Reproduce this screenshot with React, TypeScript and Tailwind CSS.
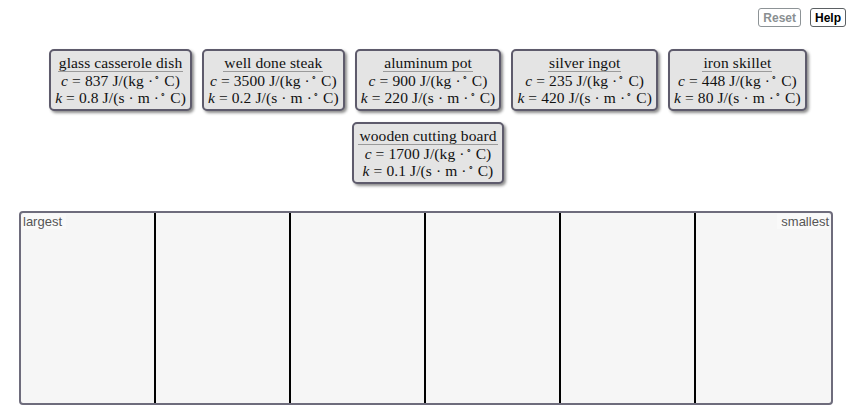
import React from "react";

type Material = { name: string; c: string; k: string };

const materials: Material[] = [
  { name: "glass casserole dish", c: "837", k: "0.8" },
  { name: "well done steak", c: "3500", k: "0.2" },
  { name: "aluminum pot", c: "900", k: "220" },
  { name: "silver ingot", c: "235", k: "420" },
  { name: "iron skillet", c: "448", k: "80" },
  { name: "wooden cutting board", c: "1700", k: "0.1" },
];

// small raised ring used for the degree sign in the unit
const Deg = () => (
  <span className="inline-block -translate-y-[5px] pl-[1px] text-[9px] leading-none">∘</span>
);

function Card({ m }: { m: Material }) {
  return (
    <div className="rounded-[5px] border-2 border-[#5e5b6c] bg-[#e4e4e4] px-[4px] py-[3px] text-center text-[15.5px] leading-[17px] tracking-[0.1px] text-[#111] shadow-[2px_2px_3px_rgba(0,0,0,0.45)] [font-family:'Liberation_Serif',serif]">
      <div className="mx-auto w-fit border-b border-[#9a9a9a] px-[1px]">{m.name}</div>
      <div className="whitespace-nowrap">
        <i>c</i> = {m.c} J/(kg&nbsp;·<Deg />&nbsp;C)
      </div>
      <div className="whitespace-nowrap">
        <i>k</i> = {m.k} J/(s&nbsp;·&nbsp;m&nbsp;·<Deg />&nbsp;C)
      </div>
    </div>
  );
}

export default function App() {
  const cols = [0, 1, 2, 3, 4, 5];
  return (
    <div className="h-[410px] w-[856px] bg-white [font-family:'Liberation_Sans',Arial,sans-serif]">
      <div className="flex justify-end gap-[9px] pr-[10px] pt-[8px]">
        <button className="h-[19px] rounded-[3px] border border-[#8d9396] bg-white px-[4px] text-[12px] font-bold leading-[16px] text-[#8a8f92]">
          Reset
        </button>
        <button className="h-[19px] rounded-[3px] border border-[#5b6063] bg-white px-[4px] text-[12px] font-bold leading-[16px] text-black">
          Help
        </button>
      </div>

      <div className="mx-auto mt-[22px] flex w-[800px] flex-wrap justify-center gap-x-[10px] gap-y-[11px]">
        {materials.map((m) => (
          <Card key={m.name} m={m} />
        ))}
      </div>

      <div className="ml-[19px] mt-[27px] grid h-[194px] w-[814px] grid-cols-6 overflow-hidden rounded-[4px] border-2 border-[#6e6c7c] bg-[#f6f6f6]">
        {cols.map((i) => (
          <div
            key={i}
            className={`flex items-start pt-[1px] ${i < 5 ? "border-r-2 border-black" : ""} ${i === 5 ? "justify-end pr-[2px]" : "pl-[2px]"}`}
          >
            {i === 0 && (
              <span className="bg-[#f9f9f9] pr-[4px] text-[13px] leading-[15px] text-[#555]">
                largest
              </span>
            )}
            {i === 5 && (
              <span className="bg-[#f9f9f9] pl-[4px] text-[13px] leading-[15px] text-[#555]">
                smallest
              </span>
            )}
          </div>
        ))}
      </div>
    </div>
  );
}
